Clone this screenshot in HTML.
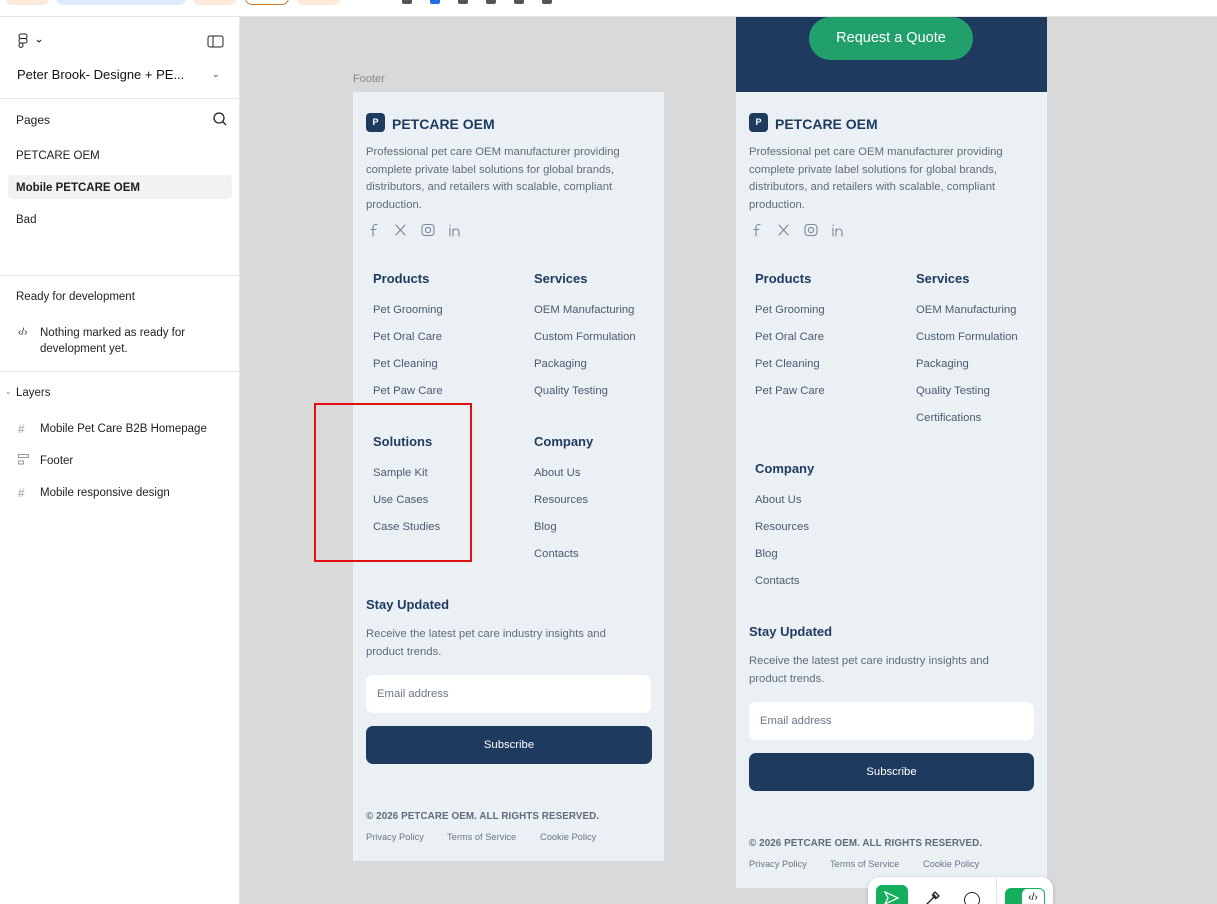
<!DOCTYPE html>
<html><head><meta charset="utf-8"><style>
*{margin:0;padding:0;box-sizing:border-box}
html,body{width:1217px;height:904px;overflow:hidden}
body{background:#d9d9d9;font-family:"Liberation Sans",sans-serif;position:relative}
.a{position:absolute;white-space:nowrap;line-height:16px}
.sb{position:absolute;left:0;top:17px;width:240px;height:887px;background:#fff;border-right:1px solid #e5e5e5}
.top{position:absolute;left:0;top:0;width:1217px;height:17px;background:#fff;border-bottom:1px solid #e5e5e5}
.s{font-size:12px;color:#1e1e1e}
.f{position:absolute;background:#ebf0f5}
.h{font-size:13px;font-weight:bold;color:#1e3a5f}
.l{font-size:11.3px;color:#4a5a70}
.p{font-size:11.3px;color:#5f6b7a;line-height:17.5px;white-space:normal}
.hr{position:absolute;left:0;width:240px;height:1px;background:#e5e5e5}
.cp{font-size:9.8px;font-weight:bold;color:#5f6b7a;letter-spacing:.1px}
.fl{font-size:9.3px;color:#6b7686}
</style></head><body>
<div class="top">
<div class="a" style="left:5px;top:-9px;width:44px;height:14px;background:#fde9dc;border-radius:7px"></div>
<div class="a" style="left:56px;top:-9px;width:130px;height:14px;background:#dfeafc;border-radius:7px"></div>
<div class="a" style="left:193px;top:-9px;width:44px;height:14px;background:#fde9dc;border-radius:7px"></div>
<div class="a" style="left:245px;top:-9px;width:44px;height:14px;border:1px solid #d07a30;border-radius:7px"></div>
<div class="a" style="left:297px;top:-9px;width:44px;height:14px;background:#fde9dc;border-radius:7px"></div>
<div class="a" style="left:402px;top:-5px;width:10px;height:9px;background:#555;border-radius:2px"></div>
<div class="a" style="left:430px;top:-5px;width:10px;height:9px;background:#1d6ee6;border-radius:2px"></div>
<div class="a" style="left:458px;top:-5px;width:10px;height:9px;background:#555;border-radius:2px"></div>
<div class="a" style="left:486px;top:-5px;width:10px;height:9px;background:#555;border-radius:2px"></div>
<div class="a" style="left:514px;top:-5px;width:10px;height:9px;background:#555;border-radius:2px"></div>
<div class="a" style="left:542px;top:-5px;width:10px;height:9px;background:#555;border-radius:2px"></div>
</div>
<div class="sb">
<svg class="a" style="left:17px;top:16px" width="26" height="16" viewBox="0 0 26 16" fill="none" stroke="#222" stroke-width="1"><rect x="2" y="1" width="8" height="4.5" rx="2"/><rect x="2" y="5.5" width="8" height="4.5" rx="2"/><rect x="2" y="10" width="4" height="4.5" rx="2"/><path d="M20 7l2 2 2-2"/></svg>
<svg class="a" style="left:207px;top:18px" width="18" height="14" viewBox="0 0 18 14" fill="none" stroke="#222"><rect x="1" y="1" width="15" height="11" rx="2"/><path d="M6 1v11"/></svg>
<div class="a" style="left:17px;top:50px;font-size:13px;color:#111">Peter Brook- Designe + PE...</div>
<div class="a" style="left:212px;top:49px;font-size:9px;color:#333">⌄</div>
<div class="hr" style="top:81px"></div>
<div class="a s" style="left:16px;top:95px;font-weight:500">Pages</div>
<svg class="a" style="left:212px;top:94px" width="16" height="16" fill="none" stroke="#222" stroke-width="1.3"><circle cx="7" cy="7" r="5"/><path d="M11 11l3 3"/></svg>
<div class="a s" style="left:16px;top:131px;font-size:11.5px">PETCARE OEM</div>
<div class="a" style="left:8px;top:158px;width:224px;height:24px;background:#f2f2f2;border-radius:5px"></div>
<div class="a s" style="left:16px;top:163px;font-size:11.5px;font-weight:bold">Mobile PETCARE OEM</div>
<div class="a s" style="left:16px;top:195px;font-size:11.5px">Bad</div>
<div class="hr" style="top:258px"></div>
<div class="a s" style="left:16px;top:272px;font-size:11.5px">Ready for development</div>
<div class="a s" style="left:18px;top:308px;font-size:10px">‹/›</div>
<div class="a s" style="left:40px;top:308px;font-size:11.5px;line-height:16px">Nothing marked as ready for<br>development yet.</div>
<div class="hr" style="top:354px"></div>
<div class="a" style="left:5px;top:367px;font-size:8px;color:#888">⌄</div>
<div class="a s" style="left:16px;top:368px;font-size:11.5px">Layers</div>
<div class="a" style="left:18px;top:404px;font-size:12px;color:#999">#</div>
<div class="a s" style="left:40px;top:404px;font-size:11.5px">Mobile Pet Care B2B Homepage</div>
<svg class="a" style="left:18px;top:437px" width="12" height="12" fill="none" stroke="#999"><rect x="0.5" y="0.5" width="10" height="3"/><rect x="0.5" y="7" width="5" height="3"/></svg>
<div class="a s" style="left:40px;top:436px;font-size:11.5px">Footer</div>
<div class="a" style="left:18px;top:468px;font-size:12px;color:#999">#</div>
<div class="a s" style="left:40px;top:468px;font-size:11.5px">Mobile responsive design</div>
</div>

<div class="a" style="left:353px;top:71px;font-size:11px;color:#888">Footer</div>

<svg width="0" height="0" style="position:absolute"><defs>
<g id="soc" fill="none" stroke="#7a8699" stroke-width="1.1" stroke-linecap="round" stroke-linejoin="round">
<path d="M10 1.5H8.5A2.5 2.5 0 0 0 6 4v9M4 6.5h5"/>
<path d="M29 2l9 10M38 2l-9 10"/>
<rect x="55" y="1.5" width="12" height="11" rx="3"/><circle cx="61" cy="7" r="2.6"/>
<path d="M83 5v8M83 2v.5M86 13V6M86 9a3 3 0 0 1 6 0v4"/>
</g></defs></svg>

<!-- Left footer -->
<div class="f" style="left:353px;top:92px;width:311px;height:769px"></div>
<div class="a" style="left:366px;top:113px;width:19px;height:19px;background:#1e3a5f;border-radius:4px;color:#fff;font-size:9px;font-weight:bold;text-align:center;line-height:19px">P</div>
<div class="a" style="left:392px;top:116px;font-size:14px;font-weight:bold;color:#1e3a5f">PETCARE OEM</div>
<div class="a p" style="left:366px;top:144px;width:285px">Professional pet care OEM manufacturer providing complete private label solutions for global brands, distributors, and retailers with scalable, compliant production.</div>
<svg class="a" style="left:367px;top:223px" width="100" height="15"><use href="#soc"/></svg>
<div class="a h" style="left:373px;top:271px">Products</div>
<div class="a h" style="left:534px;top:271px">Services</div>
<div class="a l" style="left:373px;top:302px">Pet Grooming</div>
<div class="a l" style="left:373px;top:329px">Pet Oral Care</div>
<div class="a l" style="left:373px;top:356px">Pet Cleaning</div>
<div class="a l" style="left:373px;top:383px">Pet Paw Care</div>
<div class="a l" style="left:534px;top:302px">OEM Manufacturing</div>
<div class="a l" style="left:534px;top:329px">Custom Formulation</div>
<div class="a l" style="left:534px;top:356px">Packaging</div>
<div class="a l" style="left:534px;top:383px">Quality Testing</div>
<div class="a h" style="left:373px;top:434px">Solutions</div>
<div class="a h" style="left:534px;top:434px">Company</div>
<div class="a l" style="left:373px;top:465px">Sample Kit</div>
<div class="a l" style="left:373px;top:492px">Use Cases</div>
<div class="a l" style="left:373px;top:519px">Case Studies</div>
<div class="a l" style="left:534px;top:465px">About Us</div>
<div class="a l" style="left:534px;top:492px">Resources</div>
<div class="a l" style="left:534px;top:519px">Blog</div>
<div class="a l" style="left:534px;top:546px">Contacts</div>
<div class="a" style="left:314px;top:403px;width:158px;height:159px;border:2px solid #e01010"></div>
<div class="a h" style="left:366px;top:597px">Stay Updated</div>
<div class="a p" style="left:366px;top:626px;width:255px">Receive the latest pet care industry insights and product trends.</div>
<div class="a" style="left:366px;top:675px;width:285px;height:38px;background:#fff;border-radius:7px;font-size:11.3px;color:#6b7686;padding-left:11px;line-height:38px">Email address</div>
<div class="a" style="left:366px;top:726px;width:286px;height:38px;background:#1e3a5f;border-radius:7px;font-size:11.3px;color:#fff;text-align:center;line-height:38px">Subscribe</div>
<div class="a cp" style="left:366px;top:809px">© 2026 PETCARE OEM. ALL RIGHTS RESERVED.</div>
<div class="a fl" style="left:366px;top:829px">Privacy Policy</div>
<div class="a fl" style="left:447px;top:829px">Terms of Service</div>
<div class="a fl" style="left:540px;top:829px">Cookie Policy</div>

<!-- Right footer -->
<div class="a" style="left:736px;top:17px;width:311px;height:75px;background:#1e3a5f"></div>
<div class="a" style="left:809px;top:17px;width:164px;height:43px;background:#22a06b;border-radius:22px;color:#fff;font-size:14.5px;text-align:center;line-height:43px">Request a Quote</div>
<div class="f" style="left:736px;top:92px;width:311px;height:796px"></div>
<div class="a" style="left:749px;top:113px;width:19px;height:19px;background:#1e3a5f;border-radius:4px;color:#fff;font-size:9px;font-weight:bold;text-align:center;line-height:19px">P</div>
<div class="a" style="left:775px;top:116px;font-size:14px;font-weight:bold;color:#1e3a5f">PETCARE OEM</div>
<div class="a p" style="left:749px;top:144px;width:285px">Professional pet care OEM manufacturer providing complete private label solutions for global brands, distributors, and retailers with scalable, compliant production.</div>
<svg class="a" style="left:750px;top:223px" width="100" height="15"><use href="#soc"/></svg>
<div class="a h" style="left:755px;top:271px">Products</div>
<div class="a h" style="left:916px;top:271px">Services</div>
<div class="a l" style="left:755px;top:302px">Pet Grooming</div>
<div class="a l" style="left:755px;top:329px">Pet Oral Care</div>
<div class="a l" style="left:755px;top:356px">Pet Cleaning</div>
<div class="a l" style="left:755px;top:383px">Pet Paw Care</div>
<div class="a l" style="left:916px;top:302px">OEM Manufacturing</div>
<div class="a l" style="left:916px;top:329px">Custom Formulation</div>
<div class="a l" style="left:916px;top:356px">Packaging</div>
<div class="a l" style="left:916px;top:383px">Quality Testing</div>
<div class="a l" style="left:916px;top:410px">Certifications</div>
<div class="a h" style="left:755px;top:461px">Company</div>
<div class="a l" style="left:755px;top:492px">About Us</div>
<div class="a l" style="left:755px;top:519px">Resources</div>
<div class="a l" style="left:755px;top:546px">Blog</div>
<div class="a l" style="left:755px;top:573px">Contacts</div>
<div class="a h" style="left:749px;top:624px">Stay Updated</div>
<div class="a p" style="left:749px;top:653px;width:255px">Receive the latest pet care industry insights and product trends.</div>
<div class="a" style="left:749px;top:702px;width:285px;height:38px;background:#fff;border-radius:7px;font-size:11.3px;color:#6b7686;padding-left:11px;line-height:38px">Email address</div>
<div class="a" style="left:749px;top:753px;width:285px;height:38px;background:#1e3a5f;border-radius:7px;font-size:11.3px;color:#fff;text-align:center;line-height:38px">Subscribe</div>
<div class="a cp" style="left:749px;top:836px">© 2026 PETCARE OEM. ALL RIGHTS RESERVED.</div>
<div class="a fl" style="left:749px;top:856px">Privacy Policy</div>
<div class="a fl" style="left:830px;top:856px">Terms of Service</div>
<div class="a fl" style="left:923px;top:856px">Cookie Policy</div>

<!-- toolbar -->
<div class="a" style="left:868px;top:877px;width:185px;height:40px;background:#fff;border-radius:12px;box-shadow:0 1px 4px rgba(0,0,0,.2)"></div>
<div class="a" style="left:876px;top:885px;width:32px;height:30px;background:#14ae5c;border-radius:6px"></div>
<svg class="a" style="left:884px;top:891px" width="16" height="14" fill="none" stroke="#fff" stroke-width="1.3"><path d="M1 1l13 6-13 6 3-6z"/></svg>
<svg class="a" style="left:924px;top:890px" width="18" height="16" fill="none" stroke="#222" stroke-width="1.3"><path d="M2 15l8-8M8 5l4 4M11 2l4 4-2 2-4-4z"/></svg>
<div class="a" style="left:964px;top:892px;width:16px;height:16px;border:1.4px solid #222;border-radius:50%"></div>
<div class="a" style="left:996px;top:877px;width:1px;height:27px;background:#e5e5e5"></div>
<div class="a" style="left:1005px;top:888px;width:40px;height:20px;background:#14ae5c;border-radius:6px"></div>
<div class="a" style="left:1022px;top:889px;width:22px;height:18px;background:#fff;border-radius:5px;font-size:10px;text-align:center;line-height:18px">‹/›</div>
</body></html>
